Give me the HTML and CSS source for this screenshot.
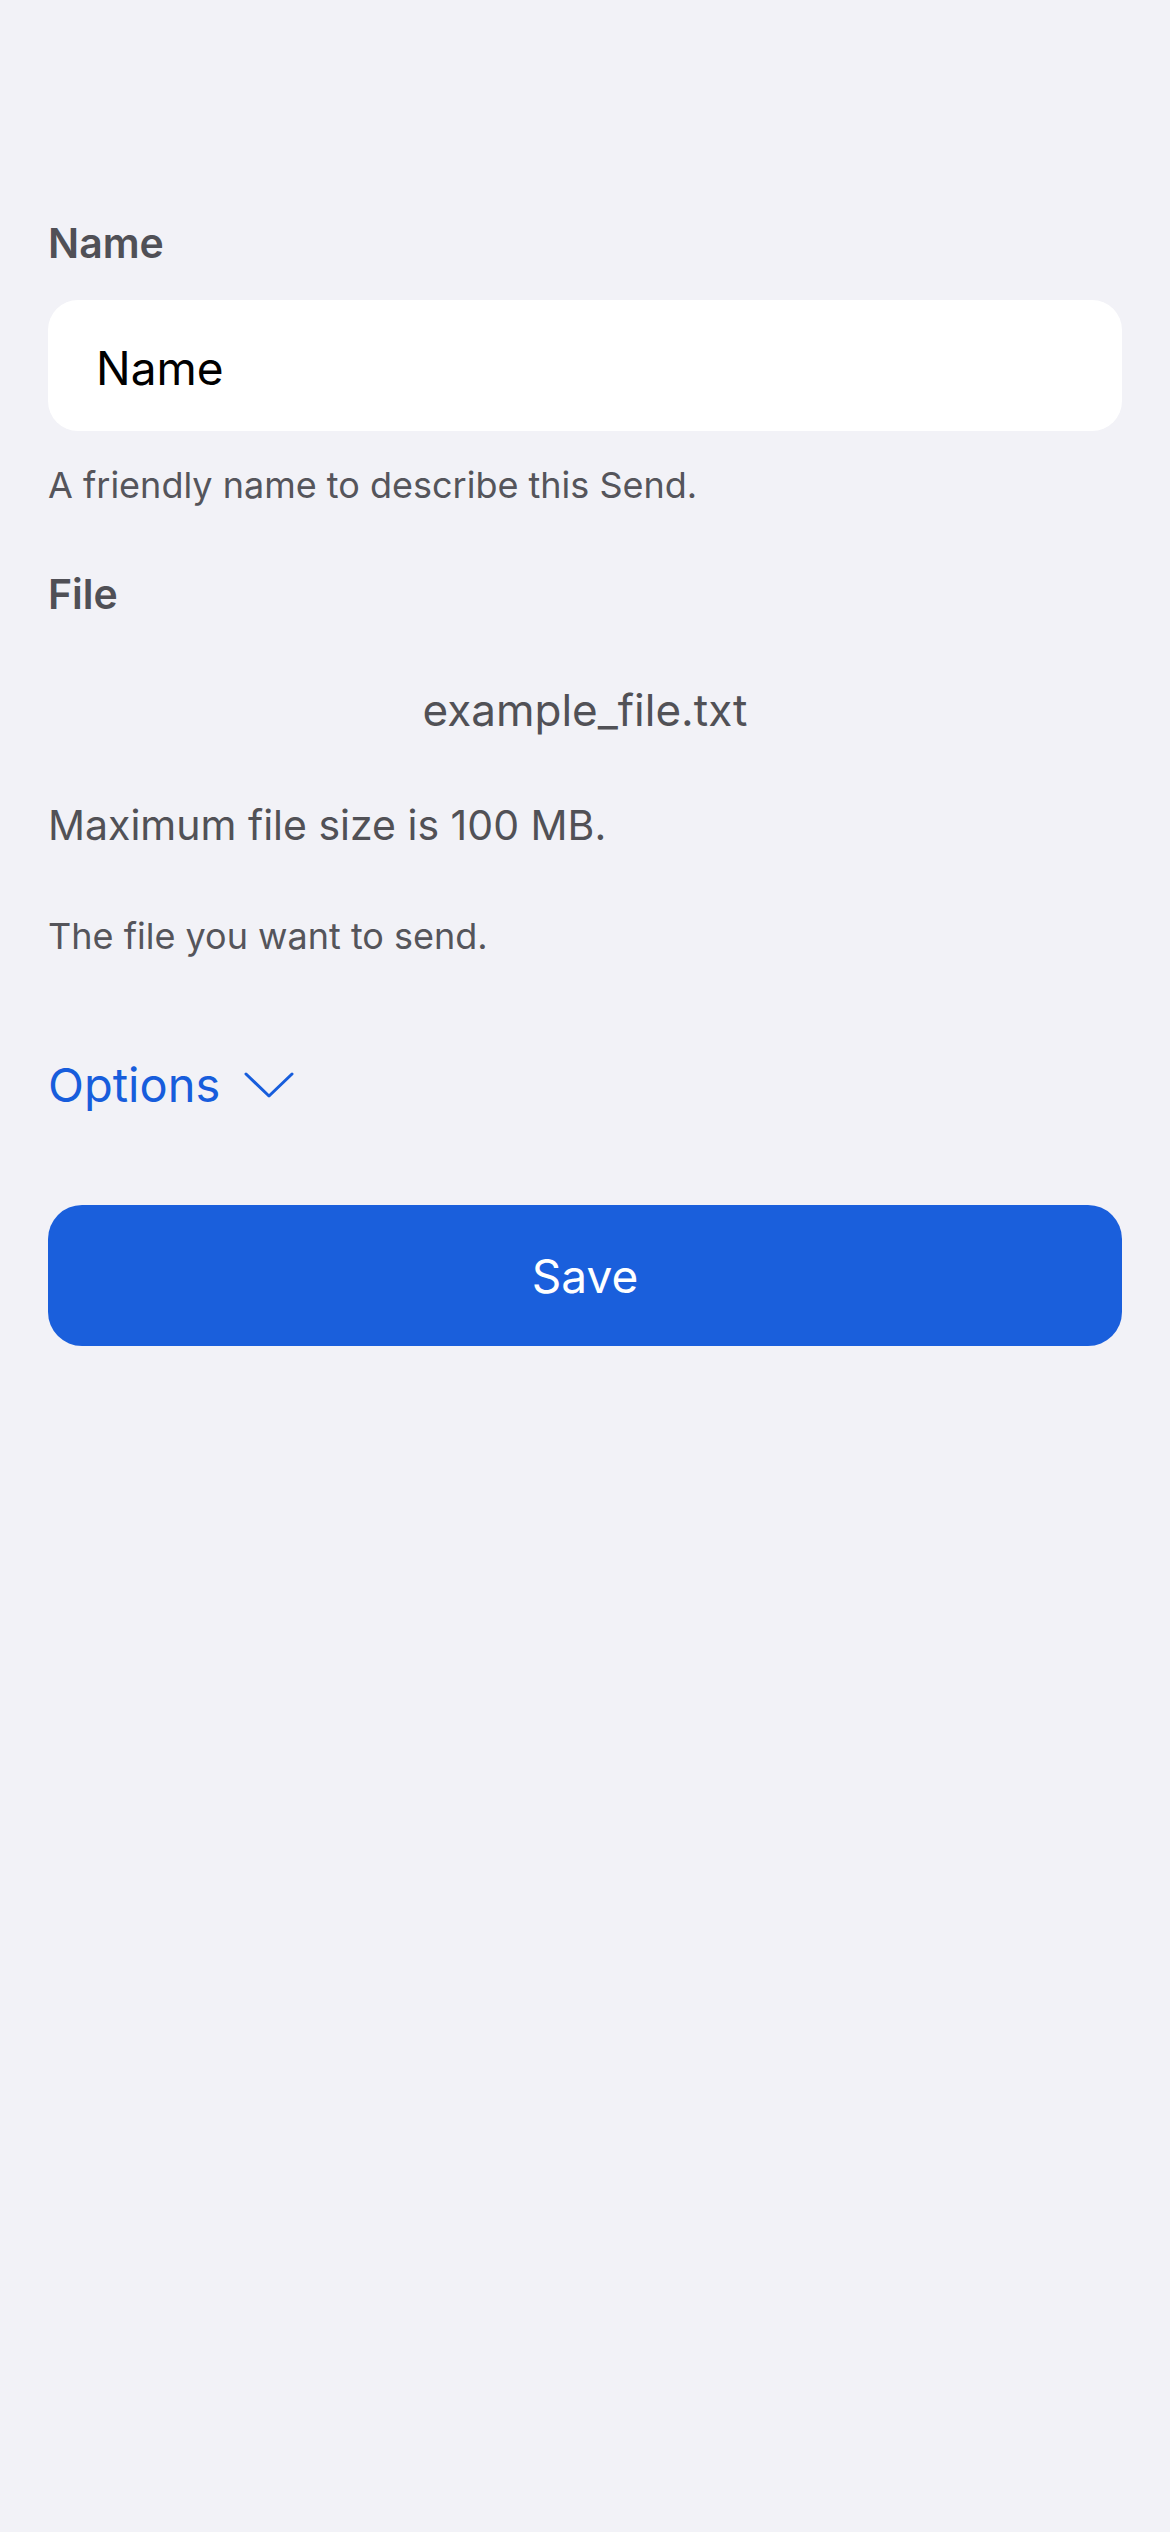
FILE: index.html
```html
<!DOCTYPE html>
<html lang="en">
<head>
<meta charset="utf-8">
<title>New Send</title>
<link rel="stylesheet" href="styles.css">
</head>
<body>
<main class="form">
  <div class="label label-name">Name</div>
  <div class="input"><span class="input-text">Name</span></div>
  <p class="helper helper-name">A friendly name to describe this Send.</p>

  <div class="label label-file">File</div>
  <p class="file-name">example_file.txt</p>
  <p class="max-size">Maximum file size is 100 MB.</p>
  <p class="helper helper-file">The file you want to send.</p>

  <div class="options">
    <span class="options-text">Options</span>
    <svg class="chevron" width="50" height="26" viewBox="0 0 50 26" aria-hidden="true">
      <polyline points="2,2 25,24 48,2" fill="none" stroke="#175ddc" stroke-width="3" stroke-linecap="round" stroke-linejoin="round"/>
    </svg>
  </div>

  <button class="save" type="button">Save</button>
</main>
</body>
</html>
```

FILE: styles.css
```css
html, body {
  margin: 0;
  padding: 0;
  background: #f2f2f7;
}

body {
  font-family: Inter, "Noto Sans", "Liberation Sans", sans-serif;
  color: #515156;
  min-height: 2532px;
}

.form {
  display: flex;
  flex-direction: column;
  padding: 219px 48px 0;
}

p {
  margin: 0;
}

.label {
  font-size: 41px;
  line-height: 48px;
  font-weight: 600;
  color: #505056;
}

.input {
  margin-top: 33px;
  height: 131px;
  box-sizing: border-box;
  padding: 41px 48px 36px;
  background: #ffffff;
  border-radius: 30px;
}

.input-text {
  display: block;
  font-size: 46px;
  line-height: 54px;
  color: #000000;
}

.helper {
  font-size: 36px;
  line-height: 44px;
  color: #55555b;
}

.helper-name {
  margin-top: 32px;
}

.label-file {
  margin-top: 63px;
}

.file-name {
  margin-top: 65px;
  font-size: 44px;
  line-height: 54px;
  text-align: center;
}

.max-size {
  margin-top: 63px;
  font-size: 41px;
  line-height: 50px;
}

.helper-file {
  margin-top: 64px;
}

.options {
  margin-top: 99px;
  display: flex;
  align-items: center;
  gap: 24px;
  height: 56px;
}

.options-text {
  font-size: 47px;
  line-height: 56px;
  color: #175ddc;
}

.chevron {
  display: block;
}

.save {
  margin-top: 92px;
  height: 141px;
  width: 100%;
  border: none;
  border-radius: 34px;
  background: #1a5fdc;
  color: #ffffff;
  font-family: inherit;
  font-size: 46px;
  line-height: 56px;
  display: flex;
  align-items: center;
  justify-content: center;
  padding: 0;
}
```
